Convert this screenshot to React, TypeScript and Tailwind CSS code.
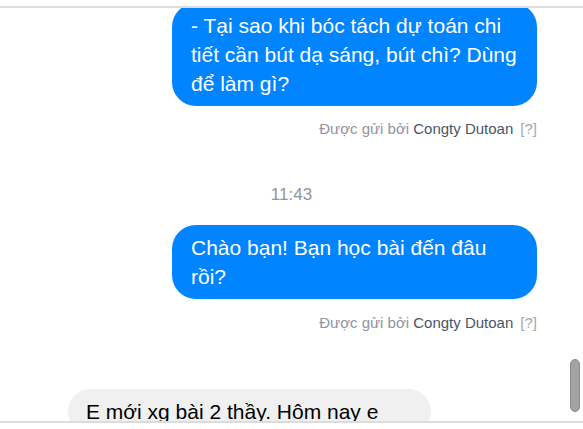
import React from "react";

type Msg =
  | { kind: "out"; text: string; sender?: string }
  | { kind: "in"; text: string }
  | { kind: "time"; text: string };

const messages: Msg[] = [
  {
    kind: "out",
    text: "- Tại sao khi bóc tách dự toán chi tiết cần bút dạ sáng, bút chì? Dùng để làm gì?",
    sender: "Congty Dutoan",
  },
  { kind: "time", text: "11:43" },
  { kind: "out", text: "Chào bạn! Bạn học bài đến đâu rồi?", sender: "Congty Dutoan" },
  { kind: "in", text: "E mới xg bài 2 thầy. Hôm nay e" },
];

function SentBy({ name, top }: { name: string; top: string }) {
  return (
    <div className={`flex justify-end pr-[46px] ${top} text-[15px] leading-[18px] text-[#90949c]`}>
      <span>
        Được gửi bởi <span className="text-[#4b5468]">{name}</span>
        <span className="ml-[7px] text-[#a6a9ae]">[?]</span>
      </span>
    </div>
  );
}

export default function App() {
  return (
    <div
      className="w-[583px] h-[429px] bg-white overflow-hidden flex flex-col"
      style={{ fontFamily: '"Liberation Sans", Arial, sans-serif' }}
    >
      {/* top strip, previous content cut off */}
      <div className="h-[6px] shrink-0 border-b-2 border-[#dcdcdc] box-content" />

      {/* scroll area */}
      <div className="relative h-[413px] shrink-0 overflow-hidden">
        <div className="-mt-[5px] flex flex-col">
          {messages.map((m, i) => {
            if (m.kind === "time") {
              return (
                <div key={i} className="mt-[47px] mb-[20px] text-center text-[17px] leading-[20px] text-[#90949c]">
                  {m.text}
                </div>
              );
            }
            if (m.kind === "out") {
              return (
                <div key={i}>
                  <div className="flex justify-end pr-[46px]">
                    <div className="w-[365px] bg-[#0084ff] text-white text-[21px] leading-[29px] rounded-[24px] pl-[19px] pr-[16px] py-[8px]">
                      {m.text}
                    </div>
                  </div>
                  {m.sender && <SentBy name={m.sender} top={i === 0 ? "mt-[14px]" : "mt-[15px]"} />}
                </div>
              );
            }
            return (
              <div key={i} className="mt-[57px] flex justify-start pl-[68px]">
                <div className="w-[363px] bg-[#f1f0f0] text-black text-[21px] leading-[29px] rounded-[24px] pl-[18px] pr-[16px] py-[8px]">
                  {m.text}
                </div>
              </div>
            );
          })}
        </div>

        {/* scrollbar thumb */}
        <div className="absolute right-[3px] top-[351px] w-[10px] h-[53px] rounded-full bg-[#a3a3a3] border border-[#8c8c8c]" />
      </div>

      <div className="h-[8px] shrink-0 border-t-2 border-[#dcdcdc] box-content" />
    </div>
  );
}
